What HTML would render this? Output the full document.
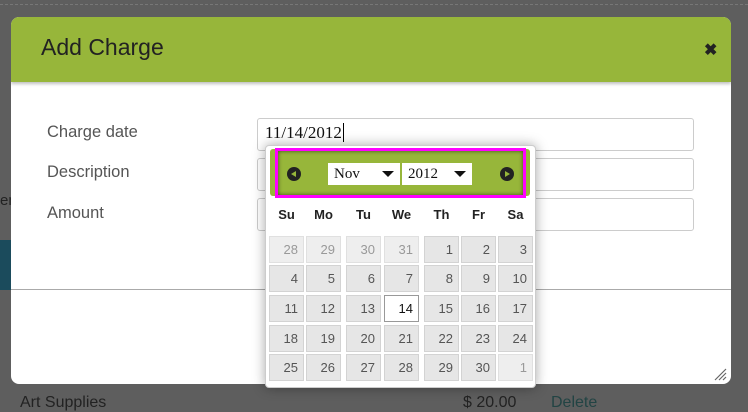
<!DOCTYPE html>
<html><head><meta charset="utf-8"><style>
*{margin:0;padding:0;box-sizing:border-box}
body{width:748px;height:404px;overflow:hidden;background:#5e5e5e;font-family:"Liberation Sans",sans-serif;position:relative}
.abs{position:absolute}
.modal{left:11px;top:17px;width:720px;height:367px;background:#fff;border-radius:8px;overflow:hidden}
.hdr{left:0;top:0;width:720px;height:65px;background:#97b63a;box-shadow:0 2px 3px rgba(0,0,0,.25)}
.lbl{font-size:16.5px;color:#555}
.inp{left:257px;width:437px;height:33px;border:1px solid #ccc;border-radius:3px;background:#fff}
.dp{left:265px;top:145px;width:271px;height:243px;background:#fff;border:1px solid #ccc;border-radius:4px;box-shadow:0 0 12px rgba(0,0,0,.35)}
.c{position:absolute;width:35px;height:27px;background:#e6e6e6;border:1px solid #d3d3d3;text-align:right;padding-right:5px;font-size:13px;line-height:26px;color:#555}
.c.o{background:#eee;color:#999;border-color:#e0e0e0}
.dn{position:absolute;top:207px;width:35px;text-align:center;font-weight:bold;font-size:13px;color:#222}
.sel{position:absolute;top:163px;height:22px;background:#fff;font-family:"Liberation Serif",serif;font-size:15px;line-height:22px;padding-left:6px;color:#111}
.arr{position:absolute;right:6px;top:8px;width:0;height:0;border-left:6px solid transparent;border-right:6px solid transparent;border-top:6px solid #111}
.circ{position:absolute;top:167px;width:14px;height:14px;border-radius:50%;background:#222}
</style></head><body>
<div class="abs" style="left:0;top:0;width:748px;height:5px;border-bottom:1px dashed #777"></div>
<div class="abs" style="left:0;top:240px;width:11px;height:50px;background:#1b4b5c"></div>
<div class="abs" style="left:0;top:192px;font-size:15px;color:#222">en</div>
<div class="abs" style="left:20px;top:394px;font-size:16px;color:#222">Art Supplies</div>
<div class="abs" style="left:463px;top:394px;font-size:16px;color:#222">$ 20.00</div>
<div class="abs" style="left:551px;top:394px;font-size:16px;color:#244">Delete</div>
<div class="abs modal">
 <div class="abs hdr"></div>
 <div class="abs" style="left:30px;top:17px;font-size:23px;color:#222">Add Charge</div>
 <div class="abs" style="left:693px;top:23px;font-size:16px;font-weight:bold;color:#222">✖</div>
 <div class="abs" style="left:0;top:272px;width:720px;height:1px;background:#aaa"></div>
 <svg class="abs" style="left:702px;top:350px" width="14" height="14"><path d="M2 13L13 2M6 13L13 6M10 13L13 10" stroke="#666" stroke-width="1.2"/></svg>
</div>
<div class="abs lbl" style="left:47px;top:123px">Charge date</div>
<div class="abs lbl" style="left:47px;top:163px">Description</div>
<div class="abs lbl" style="left:47px;top:204px">Amount</div>
<div class="abs inp" style="top:118px"></div>
<div class="abs inp" style="top:158px"></div>
<div class="abs inp" style="top:198px"></div>
<div class="abs" style="left:265px;top:123px;font-family:'Liberation Serif',serif;font-size:17px;color:#111">11/14/2012<span style="border-left:1px solid #000;margin-left:1px"></span></div>
<div class="abs dp"></div>
<div class="abs" style="left:270px;top:149px;width:260px;height:47px;background:#97b63a;border-radius:3px"></div>
<div class="abs" style="left:275px;top:148px;width:251px;height:50px;border:3px solid #ff00ff;box-shadow:inset 0 0 4px rgba(0,0,0,.6)"></div>
<div class="circ" style="left:287px"></div><div class="abs" style="left:291px;top:171px;border-right:5px solid #97b63a;border-top:3px solid transparent;border-bottom:3px solid transparent"></div>
<div class="circ" style="left:500px"></div><div class="abs" style="left:505px;top:171px;border-left:5px solid #97b63a;border-top:3px solid transparent;border-bottom:3px solid transparent"></div>
<div class="sel" style="left:328px;width:72px">Nov<div class="arr"></div></div>
<div class="sel" style="left:402px;width:70px">2012<div class="arr"></div></div>
<div class="dn" style="left:269px">Su</div><div class="dn" style="left:306px">Mo</div><div class="dn" style="left:346px">Tu</div><div class="dn" style="left:384px">We</div><div class="dn" style="left:424px">Th</div><div class="dn" style="left:461px">Fr</div><div class="dn" style="left:498px">Sa</div>
<div id="g"></div>
<script>
var xs=[269,306,346,384,424,461,498],ys=[236,265,295,325,354];
var d=[28,29,30,31,1,2,3,4,5,6,7,8,9,10,11,12,13,14,15,16,17,18,19,20,21,22,23,24,25,26,27,28,29,30,1],h='';
for(var i=0;i<35;i++){var cls='c';if(i<4||i==34)cls+=' o';var st='left:'+xs[i%7]+'px;top:'+ys[Math.floor(i/7)]+'px;';if(i==17)st+='background:#fff;border-color:#999;color:#111;';h+='<div class="'+cls+'" style="'+st+'">'+d[i]+'</div>';}
document.getElementById('g').innerHTML=h;
</script>
</body></html>
